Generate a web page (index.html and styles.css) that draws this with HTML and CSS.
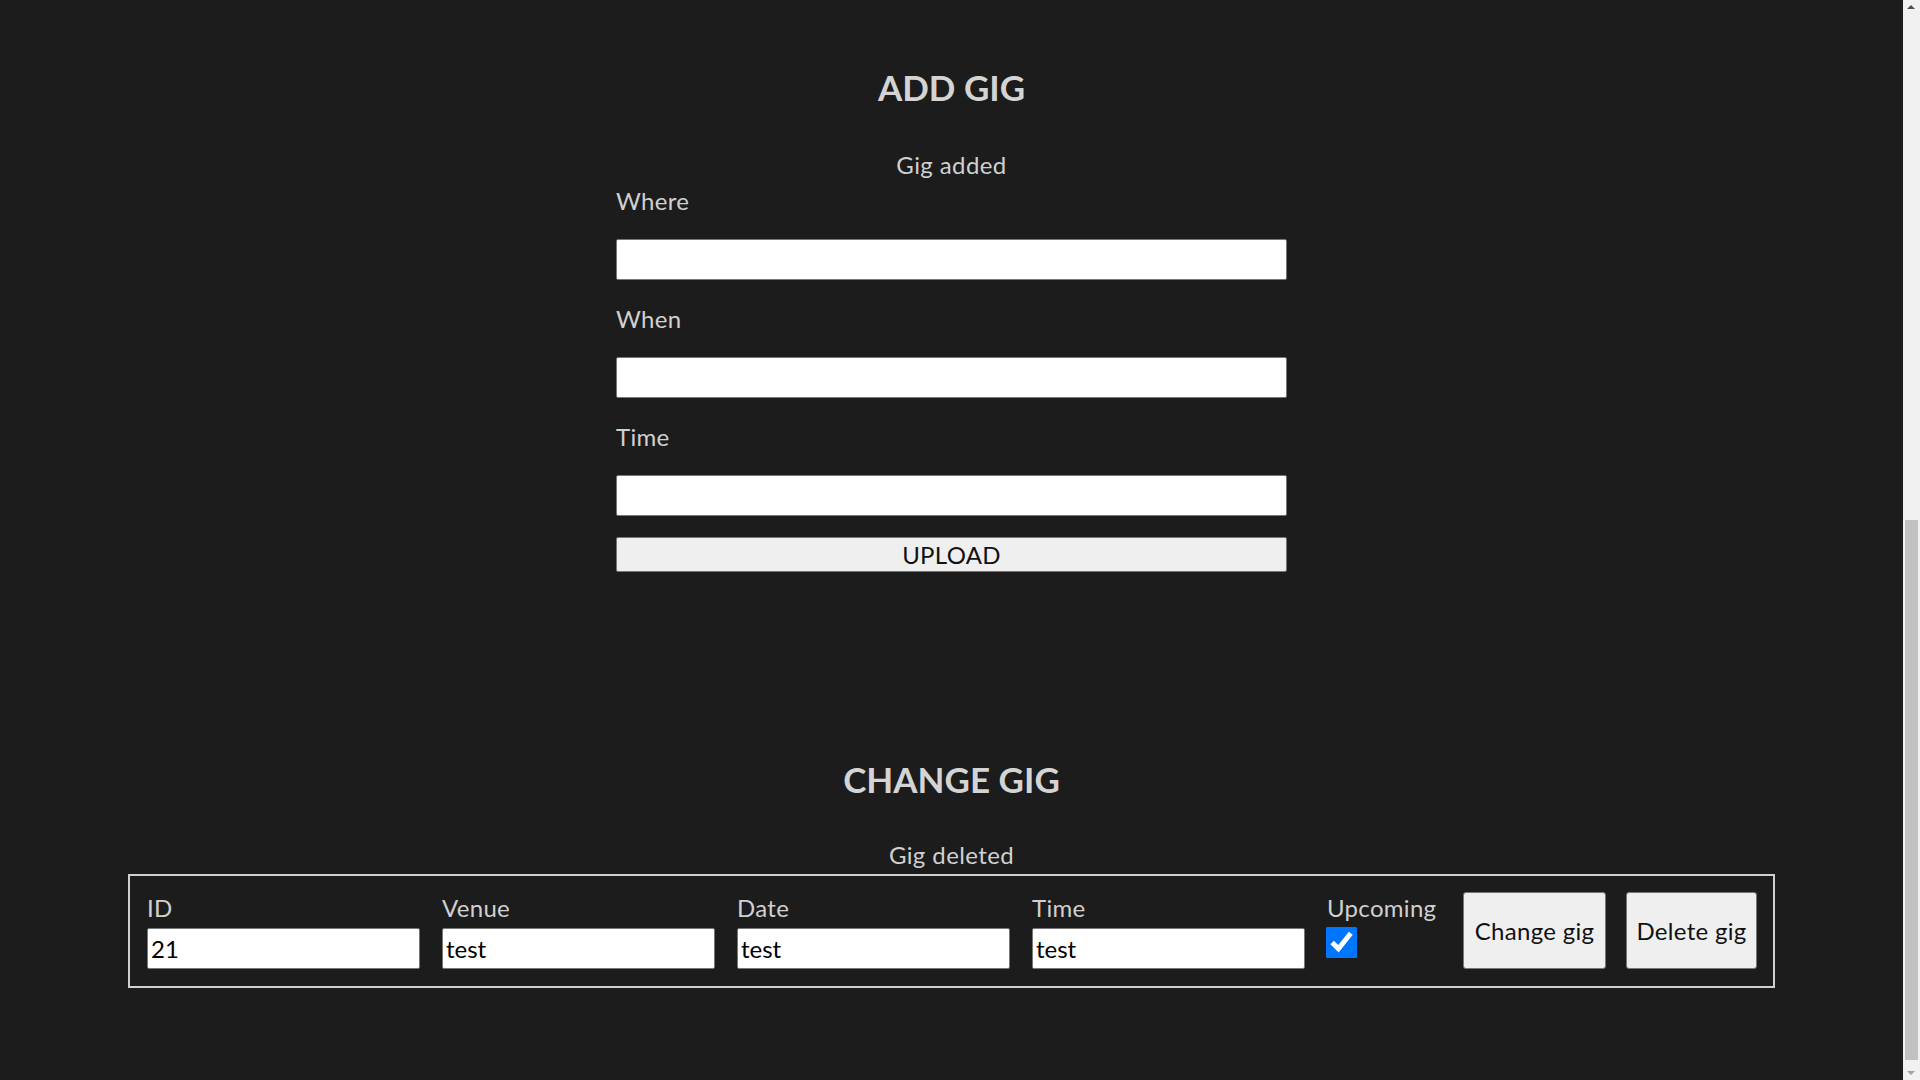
FILE: index.html
```html
<!DOCTYPE html>
<html lang="en">
<head>
<meta charset="utf-8">
<title>Gigs admin</title>
<link rel="stylesheet" href="styles.css">
</head>
<body>
<main class="page">
  <section class="panel panel-add">
    <h2 class="title">ADD GIG</h2>
    <p class="status">Gig added</p>
    <form class="add-form">
      <label class="field-label" for="where">Where</label>
      <input class="text-input" id="where" type="text">
      <label class="field-label" for="when">When</label>
      <input class="text-input" id="when" type="text">
      <label class="field-label" for="time">Time</label>
      <input class="text-input text-input-last" id="time" type="text">
      <button class="upload" type="button">UPLOAD</button>
    </form>
  </section>

  <section class="panel panel-change">
    <h2 class="title">CHANGE GIG</h2>
    <p class="status status-tight">Gig deleted</p>
    <form class="gig-row">
      <div class="col">
        <label class="col-label" for="gid">ID</label>
        <input class="row-input" id="gid" type="text" value="21">
      </div>
      <div class="col">
        <label class="col-label" for="venue">Venue</label>
        <input class="row-input" id="venue" type="text" value="test">
      </div>
      <div class="col">
        <label class="col-label" for="date">Date</label>
        <input class="row-input" id="date" type="text" value="test">
      </div>
      <div class="col">
        <label class="col-label" for="gtime">Time</label>
        <input class="row-input" id="gtime" type="text" value="test">
      </div>
      <div class="col col-check">
        <label class="col-label" for="upcoming">Upcoming</label>
        <input class="check" id="upcoming" type="checkbox" checked>
      </div>
      <button class="act act-change" type="button">Change gig</button>
      <button class="act act-delete" type="button">Delete gig</button>
    </form>
  </section>
</main>
<div class="scrollbar" aria-hidden="true">
  <span class="sb-arrow sb-up"></span>
  <span class="sb-thumb"></span>
  <span class="sb-arrow sb-down"></span>
</div>
</body>
</html>
```
FILE: styles.css
```css
html {
  overflow: hidden;
}

body {
  margin: 0;
  background: #1c1c1c;
  color: #d0d0d0;
  font-family: Lato, "Open Sans", sans-serif;
}

.page {
  width: 1903px;
  padding-top: 66px;
  padding-bottom: 92px;
}

.title {
  margin: 0;
  font-size: 35px;
  line-height: 42px;
  font-weight: 700;
  text-align: center;
  color: #d4d4d4;
}

.status {
  margin: 42px 0 0;
  font-size: 24px;
  line-height: 29px;
  letter-spacing: 0.4px;
  text-align: center;
  color: #d0d0d0;
}

.status-tight {
  margin-top: 40px;
}

.add-form {
  width: 671px;
  margin: 7px auto 0;
  display: flex;
  flex-direction: column;
}

.field-label {
  font-size: 24px;
  line-height: 29px;
  letter-spacing: 0.3px;
  margin-bottom: 24px;
  color: #d0d0d0;
}

.text-input {
  box-sizing: border-box;
  height: 41px;
  margin: 0 0 24px;
  padding: 0 3px;
  border: 1px solid #767676;
  border-radius: 2px;
  background: #fff;
  font-family: inherit;
  font-size: 22px;
}

.text-input-last {
  margin-bottom: 21px;
}

.upload {
  box-sizing: border-box;
  height: 35px;
  padding: 0;
  border: 1px solid #767676;
  border-radius: 2px;
  background: #efefef;
  color: #111;
  font-family: inherit;
  font-size: 24px;
  letter-spacing: 0.3px;
}

.panel-change {
  margin-top: 186px;
}

.gig-row {
  box-sizing: border-box;
  width: 1647px;
  margin: 5px auto 0;
  padding: 16px 16px 17px 17px;
  border: 2px solid #d0d0d0;
  display: flex;
  align-items: flex-start;
  gap: 22px;
}

.col {
  display: flex;
  flex-direction: column;
  align-items: flex-start;
}

.col-label {
  font-size: 24px;
  line-height: 32px;
  margin-bottom: 4px;
  letter-spacing: 0.3px;
  color: #d0d0d0;
}

.row-input {
  box-sizing: border-box;
  width: 273px;
  height: 41px;
  margin: 0;
  padding: 0 3px;
  border: 1px solid #767676;
  border-radius: 2px;
  background: #fff;
  color: #000;
  font-family: inherit;
  font-size: 24px;
}

.col-check {
  width: 114px;
}

.check {
  width: 31px;
  height: 31px;
  margin: -1px 0 0 -1px;
}

.act {
  box-sizing: border-box;
  height: 77px;
  padding: 0;
  border: 1px solid #767676;
  border-radius: 3px;
  background: #efefef;
  color: #111;
  font-family: inherit;
  font-size: 24px;
  letter-spacing: 0.3px;
}

.act-change {
  width: 143px;
}

.act-delete {
  width: 131px;
  margin-left: -2px;
}

/* imitation of the browser's vertical scrollbar, scrolled to the bottom */
.scrollbar {
  position: fixed;
  top: 0;
  right: 0;
  width: 17px;
  height: 100vh;
  background: #f1f1f1;
}

.sb-thumb {
  position: absolute;
  left: 2px;
  right: 2px;
  top: 520px;
  bottom: 20px;
  background: #c1c1c1;
}

.sb-arrow {
  position: absolute;
  left: 4px;
  width: 0;
  height: 0;
  border-left: 4px solid transparent;
  border-right: 4px solid transparent;
}

.sb-up {
  top: 5px;
  border-bottom: 4px solid #505050;
}

.sb-down {
  bottom: 5px;
  border-top: 4px solid #a3a3a3;
}
```
